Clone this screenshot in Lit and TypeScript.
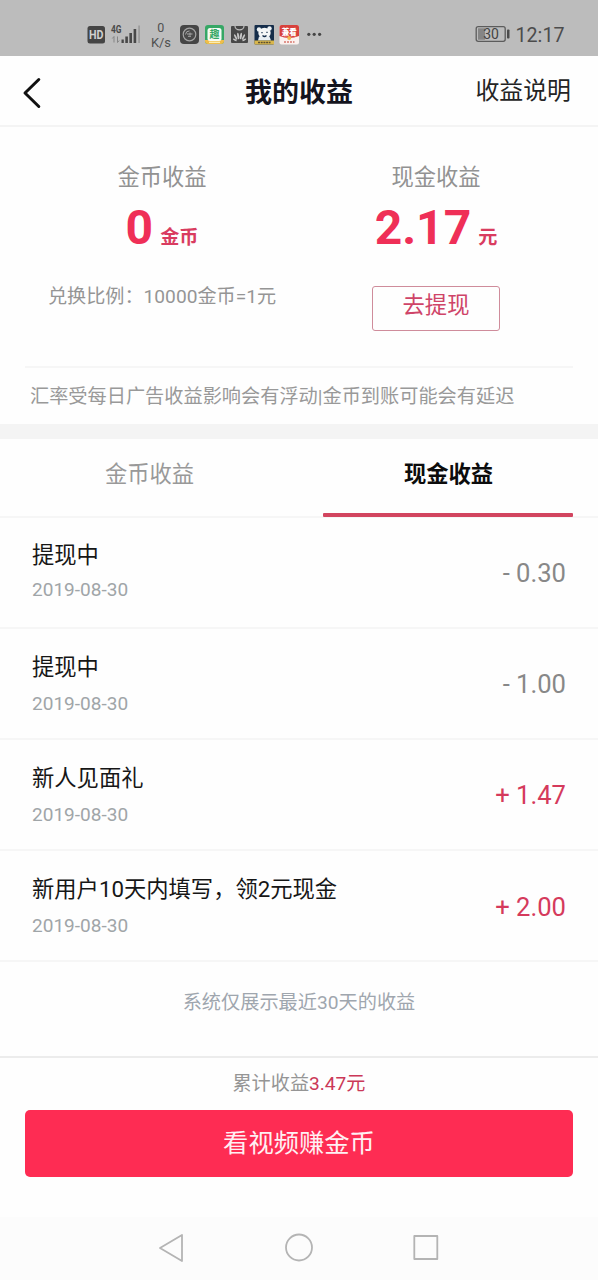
import { LitElement, html, css } from "lit";
import { customElement, property } from "lit/decorators.js";

interface Entry {
  title: string;
  date: string;
  amount: string;
  income: boolean;
}

const ENTRIES: Entry[] = [
  { title: "提现中", date: "2019-08-30", amount: "- 0.30", income: false },
  { title: "提现中", date: "2019-08-30", amount: "- 1.00", income: false },
  { title: "新人见面礼", date: "2019-08-30", amount: "+ 1.47", income: true },
  { title: "新用户10天内填写，领2元现金", date: "2019-08-30", amount: "+ 2.00", income: true },
];

@customElement("status-bar")
class StatusBar extends LitElement {
  static styles = css`
    :host {
      display: block;
      height: 56px;
      background: #bcbcbc;
      color: #4c4c4c;
    }
    svg {
      display: block;
    }
    text {
      font-family: Roboto, "Noto Sans CJK SC", sans-serif;
    }
  `;

  render() {
    return html`<svg width="598" height="56" viewBox="0 0 598 56">
      <rect x="87.5" y="26" width="17.5" height="17.5" rx="2.5" fill="#454545" />
      <text x="96.2" y="39.2" font-size="12" font-weight="700" fill="#d0d0d0" text-anchor="middle" textLength="14.5" lengthAdjust="spacingAndGlyphs">HD</text>
      <text x="111" y="33" font-size="10" font-weight="700" fill="#484848" textLength="10.5" lengthAdjust="spacingAndGlyphs">4G</text>
      <path d="M114 42.500V36.500L112.300 38.500M117.500 36.500V42.500L119.200 40.500" stroke="#858585" stroke-width="1" fill="none" />
      <g fill="#484848">
        <rect x="121.500" y="39.500" width="2.300" height="3.500" />
        <rect x="125.300" y="36.500" width="2.600" height="6.500" />
        <rect x="129.400" y="33" width="2.600" height="10" />
        <rect x="133.600" y="29" width="2.600" height="14" />
      </g>
      <rect x="138.200" y="25.500" width="1.800" height="17.500" fill="#9c9c9c" />
      <text x="160.800" y="31.500" font-size="12.500" fill="#505050" text-anchor="middle">0</text>
      <text x="161" y="47" font-size="13.500" fill="#505050" text-anchor="middle" textLength="20" lengthAdjust="spacingAndGlyphs">K/s</text>

      <rect x="180" y="25" width="19" height="19" rx="4" fill="#454545" />
      <circle cx="189.500" cy="34.500" r="6.300" fill="#4a4a4a" stroke="#a5a5a5" stroke-width="1.200" />
      <path d="M185.500 34.500a4 4 0 0 1 4-3.600M187 34h5.500M188 36.300h3M190 32.500v3" stroke="#a8a8a8" stroke-width="1" fill="none" />

      <rect x="205" y="25" width="19" height="19" rx="3" fill="#36a765" />
      <path d="M205 40h19v1a3 3 0 0 1-3 3h-13a3 3 0 0 1-3-3z" fill="#f0bd4a" />
      <rect x="207.500" y="28" width="14" height="13" rx="2.500" fill="#f6fbf5" />
      <text x="214.500" y="38.300" font-size="10" font-weight="700" fill="#36a765" text-anchor="middle">趣</text>
      <path d="M209 42.300h11" stroke="#faf0b8" stroke-width="1.300" />

      <rect x="231" y="26" width="17" height="17" rx="1" fill="#484848" />
      <path d="M235 26a4.500 3.800 0 0 0 9 0" fill="#484848" stroke="#c0c0c0" stroke-width="1.200" />
      <g fill="#c6c6c6">
        <ellipse cx="238.200" cy="36" rx="1" ry="3.400" transform="rotate(-8 238.200 36)" />
        <ellipse cx="240.900" cy="36" rx="1" ry="3.400" transform="rotate(8 240.900 36)" />
        <ellipse cx="235.600" cy="37" rx=".9" ry="3" transform="rotate(-28 235.600 37)" />
        <ellipse cx="243.500" cy="37" rx=".9" ry="3" transform="rotate(28 243.500 37)" />
        <ellipse cx="234.800" cy="39.800" rx=".8" ry="2.200" transform="rotate(-58 234.800 39.800)" />
        <ellipse cx="244.300" cy="39.800" rx=".8" ry="2.200" transform="rotate(58 244.300 39.800)" />
      </g>

      <rect x="254.500" y="25" width="19.500" height="19.500" rx="1" fill="#152d4a" />
      <circle cx="259" cy="29.500" r="2.200" fill="#eef3f5" />
      <circle cx="269.500" cy="28.500" r="2.200" fill="#eef3f5" />
      <ellipse cx="264.500" cy="33" rx="6.200" ry="5.300" fill="#f5f7f7" />
      <path d="M259 36.500h10.500l1.500 4h-13z" fill="#e8eef2" />
      <path d="M254.500 40.500h19.500v4h-19.500z" fill="#d9b64b" />
      <path d="M262 32v1.200M267 31.800v1.200M262.500 35.500q2 2 4 0" stroke="#152d4a" stroke-width="1.200" fill="none" />
      <path d="M258 42.500h12.500" stroke="#5c5030" stroke-width="1.500" stroke-dasharray="2 .7" />

      <rect x="279.500" y="25" width="19.500" height="19.500" rx="2" fill="#fbf1ee" />
      <path d="M281.500 25h15.500a2 2 0 0 1 2 2v9q-10 4-19.500 0v-9a2 2 0 0 1 2-2z" fill="#d8413c" />
      <text x="289.200" y="34.800" font-size="8" font-weight="900" fill="#fff" text-anchor="middle" textLength="15" lengthAdjust="spacingAndGlyphs">兼看</text>
      <circle cx="289.200" cy="38" r="2" fill="#f3b84c" />
      <path d="M284 42h10.500" stroke="#d9776e" stroke-width="1.500" stroke-dasharray="2 1" />

      <g fill="#454545">
        <circle cx="308.800" cy="34.300" r="1.600" />
        <circle cx="314.200" cy="34.300" r="1.600" />
        <circle cx="319.600" cy="34.300" r="1.600" />
      </g>

      <rect x="476.200" y="26.700" width="29" height="14.600" rx="2" fill="none" stroke="#5c5c5c" stroke-width="1.300" />
      <rect x="478" y="28.300" width="7" height="11.400" fill="#858585" />
      <rect x="507" y="29.500" width="2.500" height="9" rx=".8" fill="#4c4c4c" />
      <text x="491" y="39" font-size="14" fill="#444" text-anchor="middle">30</text>
      <text x="515.500" y="42" font-size="20" fill="#4c4c4c" textLength="49" lengthAdjust="spacingAndGlyphs">12:17</text>
    </svg>`;
  }
}

@customElement("income-row")
class IncomeRow extends LitElement {
  @property({ attribute: false }) entry!: Entry;

  static styles = css`
    :host {
      display: flex;
      justify-content: space-between;
      align-items: flex-start;
      box-sizing: border-box;
      height: 111px;
      padding: 22px 32px 0;
      border-bottom: 2px solid #f6f6f6;
    }
    :host(:first-of-type) {
      padding-top: 21px;
    }
    .title {
      font-size: 22.300px;
      line-height: 32px;
      color: #161616;
    }
    .date {
      margin-top: 7px;
      font-size: 19.050px;
      line-height: 28px;
      color: #a0a5a8;
    }
    :host(:first-of-type) .date {
      margin-top: 5px;
    }
    .amount {
      margin-top: 15px;
      font-size: 25.600px;
      line-height: 36px;
      color: #888;
    }
    :host(:first-of-type) .amount,
    :host(:last-of-type) .amount {
      margin-top: 16px;
    }
    .income {
      color: #d53a5c;
    }
  `;

  render() {
    return html`
      <div>
        <div class="title">${this.entry.title}</div>
        <div class="date">${this.entry.date}</div>
      </div>
      <div class="amount ${this.entry.income ? "income" : ""}">${this.entry.amount}</div>
    `;
  }
}

@customElement("app-root")
class AppRoot extends LitElement {
  static styles = css`
    :host {
      display: flex;
      flex-direction: column;
      width: 598px;
      height: 1280px;
      overflow: hidden;
      background: #fefefe;
      font-family: Roboto, "Noto Sans CJK SC", sans-serif;
      color: #161616;
    }
    * {
      box-sizing: border-box;
    }
    .header {
      display: grid;
      grid-template-columns: 1fr auto 1fr;
      align-items: center;
      height: 71px;
      padding: 0 27px 0 22px;
      border-bottom: 2px solid #f4f4f4;
    }
    .back {
      display: block;
      margin-top: 5px;
    }
    .title {
      padding-left: 5px;
      margin-top: 4px;
      font-size: 27px;
      line-height: 40px;
      font-weight: 700;
      color: #14141e;
    }
    .help {
      justify-self: end;
      margin-top: 1px;
      font-size: 23.900px;
      line-height: 36px;
      color: #242424;
    }
    .summary {
      display: grid;
      grid-template-columns: 1fr 1fr;
      height: 241px;
      margin: 0 25px;
      padding-top: 33px;
      border-bottom: 2px solid #f6f6f6;
      text-align: center;
    }
    .label {
      font-size: 22.300px;
      line-height: 34px;
      color: #929292;
    }
    .figure {
      height: 60px;
      margin-top: 4px;
      font-size: 48px;
      line-height: 60px;
      font-weight: 700;
      color: #ef2f57;
      white-space: nowrap;
    }
    .unit {
      margin-left: 7px;
      font-size: 19.150px;
      color: #d93c60;
    }
    .ratio {
      margin-top: 24px;
      font-size: 19.150px;
      line-height: 30px;
      color: #959595;
    }
    .withdraw {
      display: inline-block;
      width: 128px;
      height: 45px;
      margin-top: 28px;
      border: 1px solid #cf8c9b;
      border-radius: 3px;
      font-size: 22.300px;
      line-height: 36px;
      color: #cf4468;
    }
    .notice {
      height: 56px;
      padding-left: 30px;
      font-size: 19.200px;
      line-height: 57px;
      color: #999;
      white-space: nowrap;
    }
    .band {
      height: 15px;
      background: #f4f4f4;
    }
    .tabs {
      display: grid;
      grid-template-columns: 1fr 1fr;
      height: 79.400px;
      border-bottom: 2px solid #f6f6f6;
      font-size: 22.300px;
      line-height: 71px;
      text-align: center;
      color: #999;
    }
    .active {
      display: flex;
      flex-direction: column;
      justify-content: space-between;
      align-items: center;
      height: 78px;
      font-weight: 700;
      color: #0c0c0c;
    }
    .active::after {
      content: "";
      width: 250px;
      height: 4px;
      margin-right: 1px;
      border-radius: 1px;
      background: #d2455f;
    }
    .note {
      height: 93.600px;
      font-size: 19.200px;
      line-height: 81px;
      text-align: center;
      color: #9fa6ae;
    }
    .footer {
      flex: none;
      height: 161px;
      padding: 0 25px;
      border-top: 2px solid #ececec;
      text-align: center;
    }
    .total {
      height: 52px;
      font-size: 19.150px;
      line-height: 52px;
      color: #959595;
    }
    .sum {
      color: #cb3858;
    }
    .watch {
      height: 67px;
      border-radius: 5px;
      background: #fe2c53;
      font-size: 25.300px;
      line-height: 68px;
      color: #fff0f3;
    }
    .nav {
      display: flex;
      flex: 1;
      background: #fcfcfc;
    }
  `;

  render() {
    return html`
      <status-bar></status-bar>
      <div class="header">
        <svg class="back" width="20" height="32" viewBox="0 0 20 32">
          <path d="M16.800 2.500L3 16l13.800 13.500" fill="none" stroke="#111" stroke-width="3" stroke-linecap="round" stroke-linejoin="round" />
        </svg>
        <div class="title">我的收益</div>
        <div class="help">收益说明</div>
      </div>
      <div class="summary">
        <div>
          <div class="label">金币收益</div>
          <div class="figure">0<span class="unit">金币</span></div>
          <div class="ratio">兑换比例：10000金币=1元</div>
        </div>
        <div>
          <div class="label">现金收益</div>
          <div class="figure">2.17<span class="unit">元</span></div>
          <div class="withdraw">去提现</div>
        </div>
      </div>
      <div class="notice">汇率受每日广告收益影响会有浮动|金币到账可能会有延迟</div>
      <div class="band"></div>
      <div class="tabs">
        <div class="tab">金币收益</div>
        <div class="active">现金收益</div>
      </div>
      ${ENTRIES.map((entry) => html`<income-row .entry=${entry}></income-row>`)}
      <div class="note">系统仅展示最近30天的收益</div>
      <div class="footer">
        <div class="total">累计收益<span class="sum">3.47元</span></div>
        <div class="watch">看视频赚金币</div>
      </div>
      <div class="nav">
        <svg width="598" height="63" viewBox="0 0 598 63" fill="none" stroke="#b4b4b4" stroke-width="1.800" stroke-linejoin="round">
          <path d="M182 18L160 31l22 13z" />
          <circle cx="299" cy="30.500" r="13" />
          <rect x="414.300" y="19" width="23" height="23" />
        </svg>
      </div>
    `;
  }
}
